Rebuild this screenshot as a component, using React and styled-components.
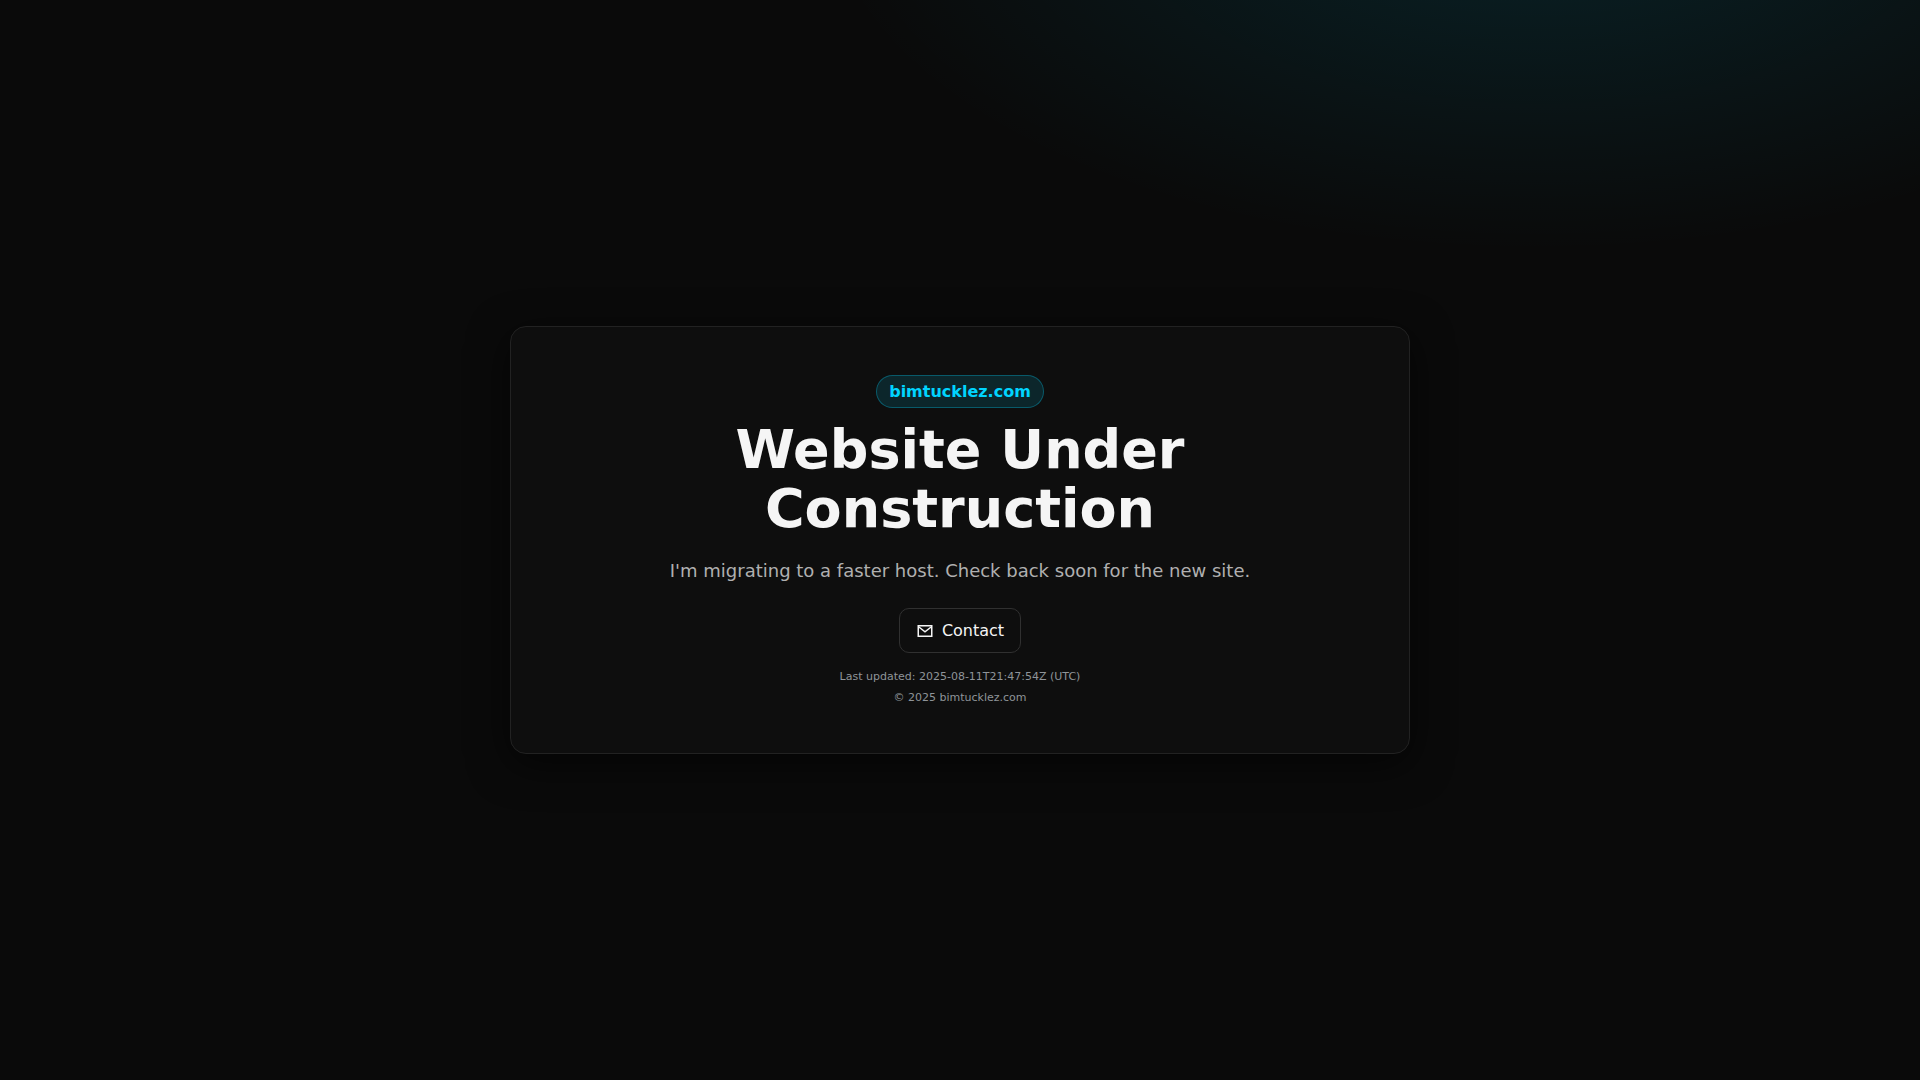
import React from "react";
import styled, { createGlobalStyle } from "styled-components";

const App = () => {
    return (
        <>
            <GlobalStyle />
            <Page>
                <Card>
                    <Badge>bimtucklez.com</Badge>
                    <Title>Website Under Construction</Title>
                    <Lead>I'm migrating to a faster host. Check back soon for the new site.</Lead>
                    <Button href="mailto:hello@bimtucklez.com">
                        <MailIcon viewBox="0 0 24 24" aria-hidden="true">
                            <path d="M3 5h18v14H3z" />
                            <path d="m3 6 9 7 9-7" />
                        </MailIcon>
                        Contact
                    </Button>
                    <Notes>
                        <div>Last updated: 2025-08-11T21:47:54Z (UTC)</div>
                        <div>© 2025 bimtucklez.com</div>
                    </Notes>
                </Card>
            </Page>
        </>
    );
}

export default App;

const GlobalStyle = createGlobalStyle`
    * {
        box-sizing: border-box;
    }

    body {
        margin: 0;
        background: #0a0a0a;
        color: #f5f5f5;
        font-family: "DejaVu Sans", sans-serif;
        font-size: 16px;
    }
`;

const Page = styled.div`
    min-height: 100vh;
    display: grid;
    place-items: center;
    padding: 32px;
    background: radial-gradient(1200px 600px at 80% -10%, rgba(0, 212, 255, 0.12), transparent 60%);
`;

const Card = styled.main`
    width: 100%;
    max-width: 900px;
    display: flex;
    flex-direction: column;
    align-items: center;
    padding: 48px;
    text-align: center;
    background: #0e0e0e;
    border: 1px solid #222;
    border-radius: 16px;
    box-shadow: 0 10px 40px rgba(0, 0, 0, 0.6);
`;

const Badge = styled.span`
    padding: 6px 12px;
    border: 1px solid rgba(0, 212, 255, 0.3);
    border-radius: 999px;
    background: rgba(0, 212, 255, 0.12);
    color: #00d4ff;
    font-weight: 700;
    line-height: 19px;
`;

const Title = styled.h1`
    margin: 12px 0 20px;
    max-width: 600px;
    font-size: 54px;
    line-height: 59px;
`;

const Lead = styled.p`
    margin: 0 0 24px;
    color: #b0b0b0;
    font-size: 18px;
    line-height: 26px;
`;

const Button = styled.a`
    display: inline-flex;
    align-items: center;
    gap: 8px;
    padding: 12px 16px;
    border: 1px solid #303030;
    border-radius: 10px;
    color: #f5f5f5;
    line-height: 19px;
    text-decoration: none;
`;

const MailIcon = styled.svg`
    width: 18px;
    height: 18px;
    fill: none;
    stroke: currentColor;
    stroke-width: 2;
`;

const Notes = styled.footer`
    display: grid;
    gap: 6px;
    margin-top: 16px;
    color: #8f9499;
    font-size: 11px;
    line-height: 15px;
`;
